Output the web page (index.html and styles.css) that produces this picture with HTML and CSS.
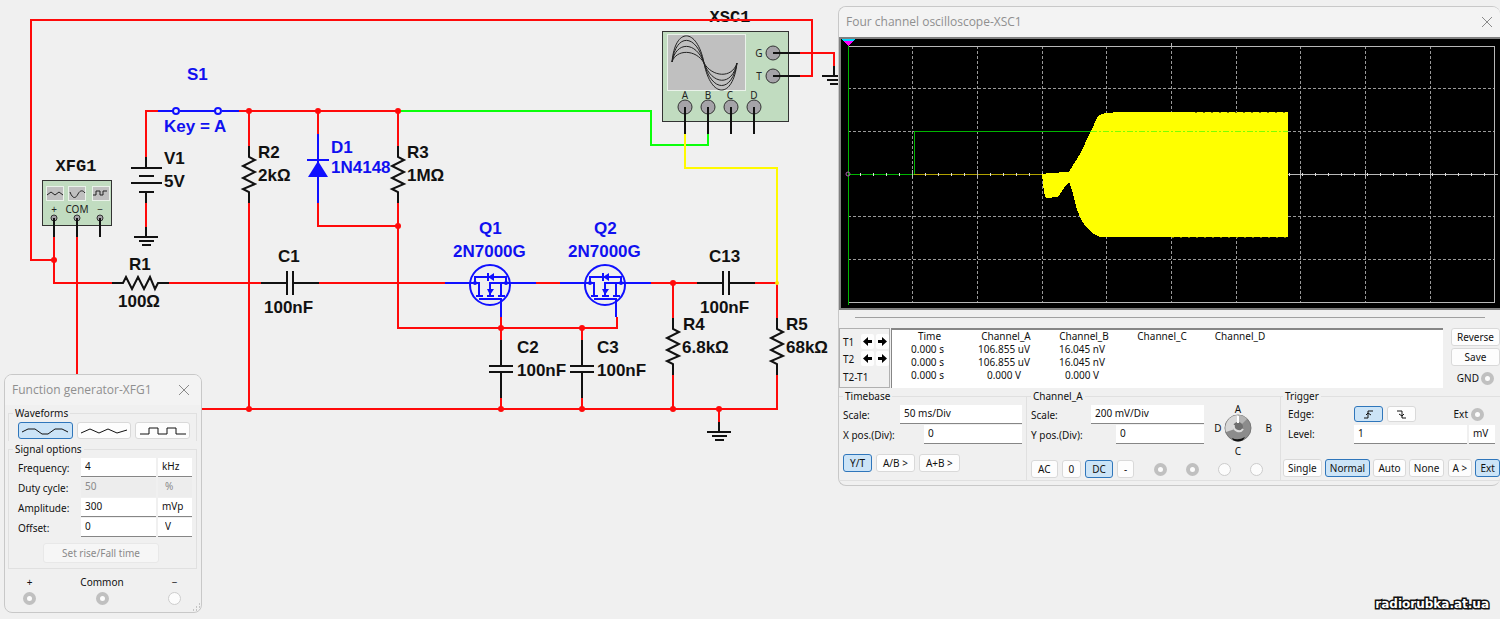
FILE: index.html
```
<!DOCTYPE html>
<html lang="en">
<head>
    <meta charset="UTF-8">
    <meta name="viewport" content="width=device-width, initial-scale=1.0">
    <title>Circuit simulation</title>
    <link rel="stylesheet" href="styles.css">
</head>
<body>
<main class="workspace">

    <svg class="schematic" width="840" height="460" viewBox="0 0 840 460">
        <defs>
            <path id="res" d="M0 -28V-17L6 -14L-6 -8L6 -2L-6 4L6 10L-6 15L0 18V29"/>
            <g id="cap">
                <path d="M0 -29V-4M0 4V29"/>
                <path d="M-12 -3H12M-12 3H12"/>
            </g>
            <path id="gnd" d="M0 -10V0M-12 0H12M-7 4H8M-4 8H5"/>
            <g id="mosfet">
                <circle cx="0" cy="2" r="20"/>
                <path d="M-45 0H-11V13M20 0H46M-15 0V-6H16V0H0V13M16 0H46M11 0V13M11 16V34M-14 13H-7M-3 13H4M8 13H15M-11 16H12M-2 -10V-2"/>
                <path class="solid" d="M-2 -6L4 -10V-2ZM-3 6H4L0 12Z"/>
                <circle class="solid" cx="-15" cy="0" r="2"/>
                <circle class="solid" cx="16" cy="0" r="2"/>
            </g>
        </defs>

        <!-- instruments -->
        <g class="device">
            <rect x="42.500" y="180.500" width="69" height="45"/>
            <rect class="screen" x="46.500" y="186.500" width="17" height="14"/>
            <rect class="screen" x="68.500" y="186.500" width="17" height="14"/>
            <rect class="screen" x="92.500" y="186.500" width="17" height="14"/>
            <path class="trace" d="M47 195L51 192L55 195L59 192L63 195M70 192C73 200 76 198 78 194S83 190 85 193M93 195H96V191H100V195H103V191H107"/>
            <rect x="662.500" y="31.500" width="126" height="90"/>
            <rect class="screen" x="667.500" y="34.500" width="78" height="56"/>
            <path class="trace" d="M672 62C675 27 697 27 704 63S733 99 737 63M672 62C676 33 696 33 704 63S732 93 737 63M672 62C676 41 696 41 704 63S732 87 737 63M672 62C676 49 696 49 704 63S732 79 737 63"/>
            <g class="jack">
                <circle cx="54" cy="218" r="3"/>
                <circle cx="77" cy="218" r="3"/>
                <circle cx="100" cy="218" r="3"/>
                <circle cx="773" cy="53" r="7"/>
                <circle cx="773" cy="76" r="7"/>
                <circle cx="685" cy="107" r="7"/>
                <circle cx="708" cy="107" r="7"/>
                <circle cx="731" cy="107" r="7"/>
                <circle cx="754" cy="107" r="7"/>
            </g>
        </g>
        <g class="pin-text">
            <text x="54" y="213">+</text>
            <text x="77" y="213">COM</text>
            <text x="100" y="213">−</text>
            <text x="759" y="57">G</text>
            <text x="759" y="80">T</text>
            <text x="685" y="99">A</text>
            <text x="708" y="99">B</text>
            <text x="730" y="99">C</text>
            <text x="754" y="99">D</text>
        </g>
        <g class="tag">
            <text x="76" y="171">XFG1</text>
            <text x="730" y="22">XSC1</text>
        </g>

        <!-- wires -->
        <g class="wire">
            <path d="M800 76H812V20H31V260H54M54 237V283H112M77 237V376M169 283H262M318 283H445M536 283H560M651 283H697M754 283H777V318"/>
            <path d="M158 111H146V157M146 203V227M239 111H398V146M249 111V146M249 203V409M318 111V134M318 203V226H398M398 203V328H617V317"/>
            <path d="M201 409H777V375M501 317V340M501 398V409M582 328V340M582 398V409M673 283V318M673 375V409M719 409V422M800 53H834V66"/>
            <path class="green" d="M398 111H651V145H708V134"/>
            <path class="yellow" d="M685 134V168H777V283"/>
        </g>
        <g class="dot">
            <circle cx="54" cy="260" r="3"/>
            <circle cx="249" cy="111" r="3"/>
            <circle cx="318" cy="111" r="3"/>
            <circle cx="398" cy="111" r="3"/>
            <circle cx="398" cy="226" r="3"/>
            <circle cx="249" cy="409" r="3"/>
            <circle cx="501" cy="328" r="3"/>
            <circle cx="582" cy="328" r="3"/>
            <circle cx="501" cy="409" r="3"/>
            <circle cx="582" cy="409" r="3"/>
            <circle cx="673" cy="409" r="3"/>
            <circle cx="719" cy="409" r="3"/>
            <circle cx="673" cy="283" r="3"/>
            <circle class="yellow-dot" cx="777" cy="283" r="2"/>
        </g>

        <!-- parts -->
        <g class="part">
            <path d="M54 218V237M77 218V237M100 218V237M773 53H800M773 76H800M685 107V134M708 107V134M731 107V134M754 107V134"/>
            <path d="M146 157V168M131 168H162M139 176H154M131 183H162M139 192H154M146 192V203"/>
            <use href="#gnd" x="146" y="237"/>
            <use href="#gnd" x="719" y="432"/>
            <use href="#gnd" x="834" y="76"/>
            <use href="#res" x="249" y="174"/>
            <use href="#res" x="398" y="174"/>
            <use href="#res" x="673" y="346"/>
            <use href="#res" x="777" y="346"/>
            <use href="#res" transform="translate(140 283) rotate(-90)"/>
            <use href="#cap" transform="translate(290 283) rotate(90)"/>
            <use href="#cap" transform="translate(726 283) rotate(90)"/>
            <use href="#cap" x="501" y="369"/>
            <use href="#cap" x="582" y="369"/>
        </g>
        <g class="part blue">
            <path d="M158 111H173M180 111H215M222 111H239M318 134V203M307 160H329"/>
            <circle cx="176" cy="111" r="3"/>
            <circle cx="218" cy="111" r="3"/>
            <path class="solid" d="M318 161L328 177H308Z"/>
            <use href="#mosfet" x="490" y="283"/>
            <use href="#mosfet" x="605" y="283"/>
        </g>

        <g class="name">
            <text x="164" y="164">V1</text>
            <text x="164" y="187">5V</text>
            <text x="258" y="158">R2</text>
            <text x="258" y="181">2kΩ</text>
            <text x="407" y="158">R3</text>
            <text x="407" y="181">1MΩ</text>
            <text x="129" y="270">R1</text>
            <text x="118" y="307">100Ω</text>
            <text x="278" y="262">C1</text>
            <text x="264" y="313">100nF</text>
            <text x="517" y="353">C2</text>
            <text x="517" y="376">100nF</text>
            <text x="597" y="353">C3</text>
            <text x="597" y="376">100nF</text>
            <text x="709" y="262">C13</text>
            <text x="700" y="313">100nF</text>
            <text x="683" y="330">R4</text>
            <text x="682" y="353">6.8kΩ</text>
            <text x="786" y="330">R5</text>
            <text x="786" y="353">68kΩ</text>
        </g>
        <g class="name blue-text">
            <text x="187" y="80">S1</text>
            <text x="164" y="132">Key = A</text>
            <text x="331" y="153">D1</text>
            <text x="331" y="173">1N4148</text>
            <text x="479" y="234">Q1</text>
            <text x="453" y="257">2N7000G</text>
            <text x="594" y="234">Q2</text>
            <text x="568" y="257">2N7000G</text>
        </g>
    </svg>

    <section class="window generator">
        <header class="titlebar">
            <h2>Function generator-XFG1</h2>
            <button class="close" aria-label="Close"><svg width="10" height="10" viewBox="0 0 10 10"><path d="M0 0L10 10M10 0L0 10"/></svg></button>
        </header>
        <fieldset class="group">
            <legend>Waveforms</legend>
            <div class="waves">
                <button class="btn on" aria-label="Sine"><svg width="48" height="10" viewBox="0 0 48 10"><path d="M1 6L7 3H14L21 8H27L34 3H41L47 6"/></svg></button>
                <button class="btn" aria-label="Triangle"><svg width="48" height="10" viewBox="0 0 48 10"><path d="M1 7L10 3L19 7L28 3L37 7L47 4"/></svg></button>
                <button class="btn" aria-label="Square"><svg width="48" height="10" viewBox="0 0 48 10"><path d="M1 8H10V2H19V8H28V2H37V8H47"/></svg></button>
            </div>
        </fieldset>
        <fieldset class="group last">
            <legend>Signal options</legend>
            <div class="options">
                <label for="freq">Frequency:</label>
                <input id="freq" type="text" value="4">
                <input type="text" value="kHz" aria-label="Frequency unit">
                <label for="duty">Duty cycle:</label>
                <input id="duty" type="text" value="50" disabled>
                <input class="mid" type="text" value="%" aria-label="Duty cycle unit" disabled>
                <label for="ampl">Amplitude:</label>
                <input id="ampl" type="text" value="300">
                <input type="text" value="mVp" aria-label="Amplitude unit">
                <label for="offs">Offset:</label>
                <input id="offs" type="text" value="0">
                <input class="mid" type="text" value="V" aria-label="Offset unit">
            </div>
            <button class="btn rise" disabled>Set rise/Fall time</button>
        </fieldset>
        <div class="outputs">
            <label>+<input type="radio" class="full"></label>
            <label>Common<input type="radio" class="full"></label>
            <label>−<input type="radio"></label>
        </div>
        <svg class="grip" width="9" height="9" viewBox="0 0 9 9"><path d="M7 1h1M4 4h1M7 4h1M1 7h1M4 7h1M7 7h1"/></svg>
    </section>

    <section class="window scope">
        <header class="titlebar">
            <h2>Four channel oscilloscope-XSC1</h2>
            <button class="close" aria-label="Close"><svg width="10" height="10" viewBox="0 0 10 10"><path d="M0 0L10 10M10 0L0 10"/></svg></button>
        </header>

        <svg class="display" viewBox="839 37 661 273">
            <rect x="839" y="37" width="661" height="273" fill="#808080"/>
            <rect x="841" y="39" width="659" height="269" fill="#000"/>
            <path class="grid" d="M912 46V302M977 46V302M1042 46V302M1106 46V302M1171 46V302M1236 46V302M1300 46V302M1365 46V302M1430 46V302"/>
            <path class="grid" d="M848 88H1494M848 131H1494M848 216H1494M848 259H1494"/>
            <path class="axis" d="M848 46H1494V302H848M1042 174H1498M1171 43V46"/>
            <path class="green-line" d="M848 174H914"/>
            <path class="olive-line" d="M914 174H1042"/>
            <path class="ticks" d="M860 174H1494"/>
            <path class="axis" d="M912 170V178M977 170V178M1300 170V178M1365 170V178M1430 170V178"/>
            <path class="green-line" d="M848 42V305M914 174V131H1091"/>
            <path fill="#ff0" d="M1042 174L1050 173L1068 172L1070 170L1080 154L1091 131L1097 118Q1100 113 1108 113L1118 112H1288V237H1102Q1096 237 1087 228Q1080 220 1076 206L1072 190L1069 182L1066 185L1058 197L1046 198L1044 193Z"/>
            <path class="ripple" d="M1195 112H1288M1172 237H1288"/>
            <path class="lime-line" d="M1091 131H1288"/>
            <path d="M842 39H855L852 42H844Z" fill="#00d8ff"/>
            <path d="M843 41H853L848 46Z" fill="#f0f"/>
            <circle class="marker" cx="848" cy="174" r="2"/>
        </svg>

        <hr class="scroll">

        <div class="readout">
            <div class="cursors">
                <span>T1</span>
                <button class="arrow" aria-label="T1 left"><svg width="9" height="9" viewBox="0 0 9 9"><path d="M0 4.500L5 0V3H9V6H5V9Z"/></svg></button>
                <button class="arrow" aria-label="T1 right"><svg width="9" height="9" viewBox="0 0 9 9"><path d="M9 4.500L4 0V3H0V6H4V9Z"/></svg></button>
                <span>T2</span>
                <button class="arrow" aria-label="T2 left"><svg width="9" height="9" viewBox="0 0 9 9"><path d="M0 4.500L5 0V3H9V6H5V9Z"/></svg></button>
                <button class="arrow" aria-label="T2 right"><svg width="9" height="9" viewBox="0 0 9 9"><path d="M9 4.500L4 0V3H0V6H4V9Z"/></svg></button>
                <span class="diff">T2-T1</span>
            </div>
            <div class="values">
                <table>
                    <tr><th>Time</th><th>Channel_A</th><th>Channel_B</th><th>Channel_C</th><th>Channel_D</th></tr>
                    <tr><td>0.000 s</td><td>106.855 uV</td><td>16.045 nV</td><td></td><td></td></tr>
                    <tr><td>0.000 s</td><td>106.855 uV</td><td>16.045 nV</td><td></td><td></td></tr>
                    <tr><td>0.000 s</td><td>0.000 V</td><td>0.000 V</td><td></td><td></td></tr>
                </table>
            </div>
            <div class="side">
                <button class="btn">Reverse</button>
                <button class="btn">Save</button>
                <label>GND <input type="radio" class="full"></label>
            </div>
        </div>

        <div class="groups">
            <fieldset class="group">
                <legend>Timebase</legend>
                <div class="field"><label for="tscale">Scale:</label><input id="tscale" class="w-l" type="text" value="50 ms/Div"></div>
                <div class="field"><label for="xpos">X pos.(Div):</label><input id="xpos" class="w-m" type="text" value="0"></div>
                <div class="buttons">
                    <button class="btn on">Y/T</button>
                    <button class="btn">A/B &gt;</button>
                    <button class="btn">A+B &gt;</button>
                </div>
            </fieldset>

            <fieldset class="group channel">
                <legend>Channel_A</legend>
                <div class="top">
                    <div class="fields">
                        <div class="field"><label for="cscale">Scale:</label><input id="cscale" class="w-c" type="text" value="200 mV/Div"></div>
                        <div class="field"><label for="ypos">Y pos.(Div):</label><input id="ypos" class="w-s" type="text" value="0"></div>
                    </div>
                    <div class="dial">
                        <span class="a">A</span>
                        <span class="d">D</span>
                        <svg class="knob" width="28" height="28" viewBox="0 0 28 28">
                            <circle cx="14" cy="14" r="13" fill="#8c8c8c" stroke="#777"/>
                            <path d="M14 14L2 18A13 13 0 0 1 14 1Z" fill="#d8d8d8"/>
                            <path d="M14 14V1A13 13 0 0 1 23 5Z" fill="#b4b4b4"/>
                            <path d="M8 24Q14 27 21 23L19 26Q14 29 9 26Z" fill="#111"/>
                            <circle cx="14" cy="13" r="5" fill="#707070"/>
                            <path d="M10 11A5 5 0 0 0 19 15" fill="none" stroke="#ddd" stroke-width="2"/>
                            <path d="M14 2V9" stroke="#fff" stroke-width="2"/>
                        </svg>
                        <span class="b">B</span>
                        <span class="c">C</span>
                    </div>
                </div>
                <div class="buttons">
                    <button class="btn">AC</button>
                    <button class="btn">0</button>
                    <button class="btn on">DC</button>
                    <button class="btn">-</button>
                    <div class="inputs">
                        <input type="radio" class="full" aria-label="Channel A input">
                        <input type="radio" class="full" aria-label="Channel B input">
                        <input type="radio" aria-label="Channel C input">
                        <input type="radio" aria-label="Channel D input">
                    </div>
                </div>
            </fieldset>

            <fieldset class="group trigger">
                <legend>Trigger</legend>
                <div class="edge">
                    <span>Edge:</span>
                    <button class="btn on" aria-label="Rising edge"><svg width="13" height="11" viewBox="0 0 13 11"><path d="M2 9H6V2H11M4 6L6 4L9 6"/></svg></button>
                    <button class="btn" aria-label="Falling edge"><svg width="13" height="11" viewBox="0 0 13 11"><path d="M2 2H7V9H11M4 5L7 7L9 5"/></svg></button>
                    <label class="ext">Ext <input type="radio" class="full"></label>
                </div>
                <div class="edge">
                    <label for="level">Level:</label>
                    <input id="level" type="text" value="1">
                    <input class="unit" type="text" value="mV" aria-label="Level unit">
                </div>
                <div class="buttons">
                    <button class="btn">Single</button>
                    <button class="btn on">Normal</button>
                    <button class="btn">Auto</button>
                    <button class="btn">None</button>
                    <button class="btn">A &gt;</button>
                    <button class="btn on">Ext</button>
                </div>
            </fieldset>
        </div>
    </section>

    <p class="mark">radiorubka.at.ua</p>
</main>
</body>
</html>
```
FILE: styles.css
```
*
{
    margin: 0;
    padding: 0;
    box-sizing: border-box;
}
body
{
    background-color: #f0f0f0;
    color: #111;
    font: 10px/14px "Noto Sans", "Open Sans", sans-serif;
    overflow: hidden;
}
.workspace
{
    position: relative;
    min-height: 100vh;
}

/* schematic */
.schematic
{
    display: block;
}
.wire path, .part path, .part circle, .part use
{
    fill: none;
    stroke-width: 2px;
}
.wire path
{
    stroke: #ff0a0a;
}
.wire .green
{
    stroke: #0bff0b;
}
.wire .yellow
{
    stroke: #fffa00;
}
.dot
{
    fill: #ff0a0a;
}
.yellow-dot
{
    fill: #ffe600;
}
.part
{
    stroke: #111;
}
.blue
{
    stroke: #1010ff;
}
#mosfet .solid, .blue .solid
{
    fill: #1010ff;
    stroke: none;
}
.device rect
{
    fill: #c1dcc0;
    stroke: #333;
}
.device .screen
{
    fill: #c0c0c0;
    stroke: #eaf2ea;
}
.trace
{
    fill: none;
    stroke: #222;
}
.jack
{
    fill: #a5a3a8;
    stroke: #333;
}
.name
{
    font: bold 17px "Liberation Sans", Arial, sans-serif;
    fill: #111;
}
.blue-text
{
    fill: #1010f0;
}
.tag
{
    font: bold 17px "Liberation Mono", "Courier New", monospace;
    fill: #111;
    text-anchor: middle;
}
.pin-text
{
    font: 10px "Noto Sans", sans-serif;
    fill: #222;
    text-anchor: middle;
}

/* windows */
.window
{
    position: absolute;
    border: 1px solid #c8c8c8;
    border-radius: 8px;
    background-color: #f0f0f0;
    overflow: hidden;
}
.generator
{
    left: 4px;
    top: 374px;
    width: 198px;
}
.scope
{
    left: 838px;
    top: 6px;
    right: 0;
    padding-bottom: 4px;
    border-right: none;
}
.titlebar
{
    display: flex;
    align-items: center;
    justify-content: space-between;
    height: 30px;
    padding: 0 8px 0 7px;
    background-color: #f3f3f3;
}
.titlebar h2
{
    font: 12px/16px "Open Sans", "Noto Sans", sans-serif;
    color: #8f8f8f;
}
.generator .titlebar
{
    padding: 0 12px 0 7px;
}
.close
{
    display: flex;
    border: none;
    background: none;
}
.close path
{
    stroke: #8a8a8a;
}
.group
{
    min-width: 0;
    border: 1px solid #e0e0e0;
    padding: 0 4px;
}
.group legend
{
    padding: 0 2px;
    line-height: 16px;
}
.btn
{
    height: 18px;
    border: 1px solid #d9d9d9;
    border-radius: 3px;
    background-color: #fdfdfd;
    color: #111;
    font: inherit;
    text-align: center;
}
.btn.on
{
    border-color: #2f76bb;
    background-color: #cce4f7;
}
.btn:disabled
{
    color: #8a8a8a;
    border-color: #e8e8e8;
    background-color: #f6f6f6;
}
.btn svg
{
    display: block;
    margin: auto;
    fill: none;
    stroke: #111;
}
input[type=text]
{
    min-width: 0;
    height: 19px;
    border: none;
    border-bottom: 1px solid #868686;
    padding: 0 4px 2px;
    background-color: #fff;
    color: #111;
    font: inherit;
}
input[type=text]:disabled
{
    background-color: #ededed;
    border-color: #ededed;
    color: #8a8a8a;
}
input[type=radio]
{
    appearance: none;
    width: 13px;
    height: 13px;
    border: 1px solid #ccc;
    border-radius: 50%;
    background-color: #fcfcfc;
}
input[type=radio].full
{
    border: 4px solid #c0c0c0;
}

/* function generator */
.generator .group
{
    margin: 0 4px 0 3px;
    border-bottom: none;
}
.generator .group.last
{
    border-bottom: 1px solid #e0e0e0;
    padding-bottom: 5px;
}
.waves
{
    display: grid;
    grid-template-columns: repeat(3, 1fr);
    gap: 4px;
    padding: 1px 2px 2px 5px;
}
.waves .btn
{
    height: 17px;
}
.options
{
    display: grid;
    grid-template-columns: 61px 1fr 34px;
    gap: 1px 2px;
    align-items: center;
    padding: 1px 0 6px 5px;
}
.options .mid
{
    padding-left: 7px;
}
.rise
{
    display: block;
    width: 116px;
    height: 20px;
    margin: 0 auto 0 30px;
}
.outputs
{
    display: flex;
    justify-content: space-between;
    padding: 6px 20px 7px 18px;
}
.outputs label
{
    display: flex;
    flex-direction: column;
    align-items: center;
    gap: 3px;
}
.grip
{
    position: absolute;
    right: 0;
    bottom: 0;
    stroke: #999;
}

/* oscilloscope */
.display
{
    display: block;
    width: 100%;
    height: auto;
}
.display path
{
    shape-rendering: crispEdges;
}
.display .grid
{
    fill: none;
    stroke: #999;
    stroke-dasharray: 3 2;
}
.display .axis
{
    fill: none;
    stroke: #b8b8b8;
}
.display .green-line
{
    fill: none;
    stroke: #00b400;
}
.display .olive-line
{
    stroke: #b0a000;
}
.display .lime-line
{
    stroke: #7dff00;
    stroke-dasharray: 6 2 2 2;
}
.display .ripple
{
    stroke: #770;
    stroke-dasharray: 2 6;
}
.display .marker
{
    fill: none;
    stroke: #b060b0;
}
.ticks
{
    stroke: #ddd;
    stroke-width: 3px;
    stroke-dasharray: 1 12;
}
.scroll
{
    margin: 7px 15px 10px 16px;
    border: none;
    border-top: 1px solid #a0a0a0;
}
.readout
{
    display: flex;
    align-items: stretch;
    gap: 1px;
    height: 60px;
}
.cursors
{
    display: grid;
    grid-template-columns: 1fr 13px 13px;
    grid-template-rows: 17px 17px 20px;
    gap: 0 2px;
    align-items: center;
    width: 51px;
    padding: 4px 0 0 3px;
    border: 1px solid #b0b0b0;
}
.cursors .diff
{
    grid-column: span 3;
}
.arrow
{
    display: flex;
    align-items: center;
    justify-content: center;
    height: 15px;
    border: none;
    border-radius: 2px;
    background-color: #fdfdfd;
}
.values
{
    flex: 1;
    border-top: 2px solid #868686;
    border-left: 1px solid #868686;
    background-color: #fff;
}
table
{
    border-collapse: collapse;
}
th, td
{
    width: 78px;
    height: 13px;
    font-weight: normal;
    line-height: 13px;
    text-align: center;
}
td
{
    padding-right: 4px;
}
th:first-child, td:first-child
{
    width: 75px;
}
.side
{
    display: flex;
    flex-direction: column;
    gap: 2px;
    width: 56px;
    padding-left: 7px;
}
.side label
{
    display: flex;
    align-items: center;
    justify-content: flex-end;
    gap: 2px;
    padding: 3px 6px 0 0;
}
.groups
{
    display: grid;
    grid-template-columns: 188fr 254fr 219fr;
}
.groups .group
{
    border-left: none;
    height: 93px;
}
.groups .group:last-child
{
    border-right: none;
}
.field
{
    display: flex;
    align-items: center;
    justify-content: space-between;
    margin-top: 1px;
}
.w-l
{
    width: 122px;
}
.w-m
{
    width: 98px;
}
.w-c
{
    width: 113px;
}
.w-s
{
    width: 88px;
}
.buttons
{
    display: flex;
    gap: 4px;
    margin-top: 10px;
}
.buttons .btn
{
    padding: 0 6px;
}
.channel .buttons
{
    margin-top: 0;
}
.top
{
    display: flex;
    gap: 8px;
    height: 56px;
}
.fields
{
    flex: 1;
}
.dial
{
    display: grid;
    grid-template-columns: 12px 28px 20px;
    grid-template-rows: 10px 28px 1fr;
    grid-template-areas: ". a ." "d k b" ". c .";
    align-items: center;
    justify-items: center;
    width: 64px;
}
.knob
{
    grid-area: k;
}
.dial .a
{
    grid-area: a;
}
.dial .b
{
    grid-area: b;
    justify-self: end;
}
.dial .c
{
    grid-area: c;
}
.dial .d
{
    grid-area: d;
}
.inputs
{
    display: flex;
    flex: 1;
    align-items: center;
    justify-content: space-between;
    padding: 0 13px 0 16px;
}
.edge
{
    display: flex;
    align-items: center;
    height: 20px;
    padding: 0 5px 0 5px;
    gap: 2px;
}
.edge > :first-child
{
    width: 64px;
}
.edge .btn
{
    width: 29px;
    height: 16px;
    margin-right: 2px;
}
.edge input[type=text]
{
    flex: 1;
}
.edge .unit[type=text]
{
    flex: 0 0 26px;
}
.ext
{
    display: flex;
    align-items: center;
    gap: 3px;
    margin-left: auto;
    padding-right: 11px;
}
.trigger
{
    padding: 0 0 0 2px;
}
.trigger .buttons
{
    justify-content: space-between;
    gap: 2px;
    margin-top: 15px;
}
.trigger .btn
{
    padding: 0 4px;
}

.mark
{
    position: absolute;
    right: 11px;
    bottom: 8px;
    color: #fff;
    font: bold 12px/14px "DejaVu Sans", sans-serif;
    -webkit-text-stroke: 3px #111;
    paint-order: stroke fill;
}
```
